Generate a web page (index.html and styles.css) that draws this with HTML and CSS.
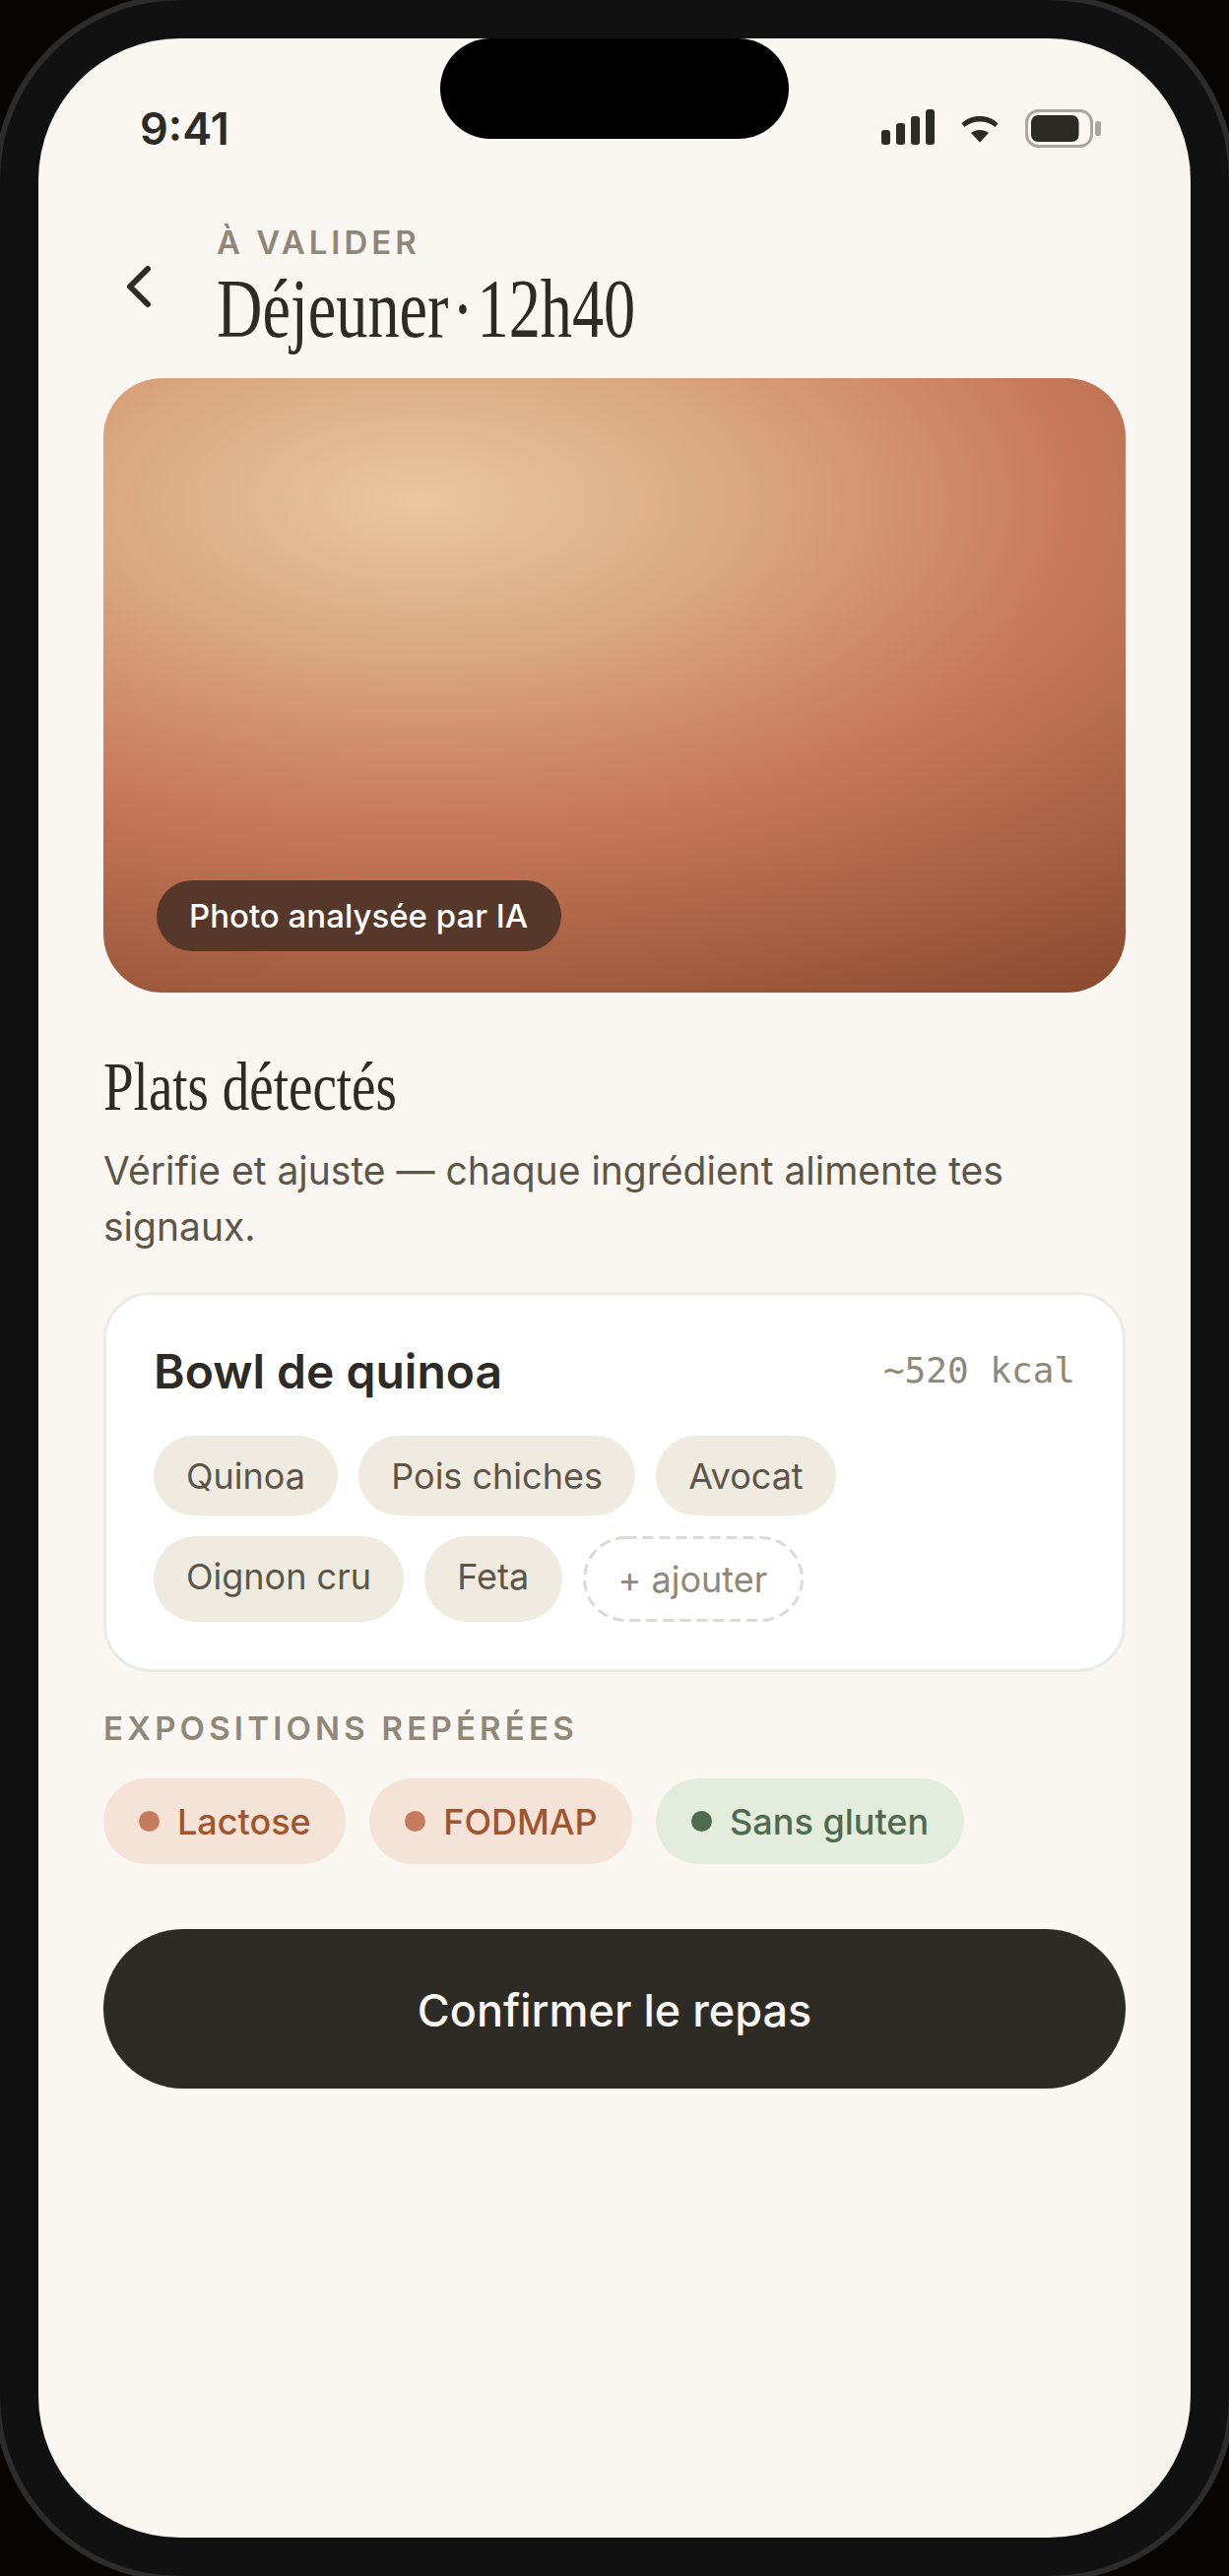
FILE: index.html
```html
<!DOCTYPE html>
<html lang="fr">
<head>
<meta charset="utf-8">
<title>Déjeuner · 12h40</title>
<link rel="stylesheet" href="styles.css">
</head>
<body>
<div class="phone">
  <div class="screen">
    <div class="island"></div>
    <div class="status">
      <span class="time">9:41</span>
      <div class="status-icons">
        <svg class="ic-signal" width="54" height="39" viewBox="0 0 54 39"><rect x="0" y="21" width="9" height="15" rx="3"/><rect x="15" y="14" width="9" height="22" rx="3"/><rect x="30" y="7" width="9" height="29" rx="3"/><rect x="45" y="0" width="9" height="36" rx="3"/></svg>
        <svg class="ic-wifi" width="38" height="39" viewBox="0 0 38 39"><g transform="translate(0 7)"><path d="M.5 7.5C5 2.5 11.5 0 19 0s14 2.500 18.500 7.500L34.500 11C30.500 7.500 25 5.500 19 5.500S7.500 7.500 3.500 11z"/><path d="M10 17c2.500-2 5.500-3 9-3s6.500 1 9 3L19 26.500z"/></g></svg>
        <svg class="ic-battery" width="77" height="39" viewBox="0 0 77 39"><rect x="1.500" y="1.500" width="66" height="36" rx="12" fill="none" stroke="#AAA79F" stroke-width="3"/><rect x="6" y="6" width="48.500" height="27" rx="7" fill="#2D2B26"/><rect x="71" y="12" width="6" height="15" rx="2.500" fill="#AAA79F"/></svg>
      </div>
    </div>
    <header class="head">
      <svg class="back" width="72" height="72" viewBox="0 0 24 24"><path d="M15 6l-6 6 6 6" fill="none" stroke="#2D2B26" stroke-width="2" stroke-linecap="round" stroke-linejoin="round"/></svg>
      <div class="head-text">
        <div class="eyebrow">À VALIDER</div>
        <h1 class="title">Déjeuner · 12h40</h1>
      </div>
    </header>
    <main class="content">
      <div class="photo">
        <span class="photo-badge">Photo analysée par IA</span>
      </div>
      <h2 class="section-title">Plats détectés</h2>
      <p class="desc">Vérifie et ajuste — chaque ingrédient alimente tes signaux.</p>
      <section class="card">
        <div class="card-head">
          <span class="dish">Bowl de quinoa</span>
          <span class="kcal">~520 kcal</span>
        </div>
        <div class="chips">
          <span class="chip">Quinoa</span>
          <span class="chip">Pois chiches</span>
          <span class="chip">Avocat</span>
          <span class="chip">Oignon cru</span>
          <span class="chip">Feta</span>
          <span class="chip chip-add">+ ajouter<svg class="dash" width="100%" height="100%"><rect class="dash-rect" x="1.500" y="1.500" rx="42" ry="42"/></svg></span>
        </div>
      </section>
      <div class="label">EXPOSITIONS REPÉRÉES</div>
      <div class="pills">
        <span class="pill pill-warn"><i class="dot"></i>Lactose</span>
        <span class="pill pill-warn"><i class="dot"></i>FODMAP</span>
        <span class="pill pill-ok"><i class="dot"></i>Sans gluten</span>
      </div>
      <button class="confirm">Confirmer le repas</button>
    </main>
  </div>
</div>
</body>
</html>
```
FILE: styles.css
```css
* { box-sizing: border-box; }
html, body { margin: 0; padding: 0; }
body {
  width: 1248px;
  height: 2616px;
  overflow: hidden;
  background: #060504;
  font-family: "Inter", "Liberation Sans", sans-serif;
  color: #2D2B26;
}
.phone {
  width: 1248px;
  height: 2616px;
  padding: 39px;
  background: #111111;
  border-radius: 183px;
  box-shadow: 0 0 0 6px #2C2C2C;
}
.screen {
  position: relative;
  height: 2538px;
  border-radius: 144px;
  overflow: hidden;
  background: linear-gradient(90deg, #FAF7F2 92%, #F6F3EE 100%);
}
.island {
  position: absolute;
  left: 408px;
  top: 0;
  width: 354px;
  height: 102px;
  border-radius: 51px;
  background: #000;
}
.status {
  display: flex;
  justify-content: space-between;
  align-items: flex-start;
  height: 119px;
  padding: 65px 91px 0 103px;
}
.time {
  font-size: 45px;
  line-height: 54px;
  font-weight: 600;
  color: #2D2B26;
}
.status-icons {
  display: flex;
  gap: 27px;
  margin-top: 7px;
  fill: #2D2B26;
}
.head {
  display: flex;
  align-items: center;
  gap: 43px;
  padding: 68px 66px 0;
}
.back { flex: none; margin-top: -3px; }
.eyebrow {
  font-size: 33px;
  line-height: 40px;
  font-weight: 600;
  letter-spacing: 3.96px;
  color: #8F8778;
}
.title {
  margin: 3px 0 0;
  font-family: "Liberation Serif", serif;
  font-size: 84px;
  line-height: 90px;
  font-weight: 400;
  word-spacing: -16px;
  white-space: nowrap;
  transform: scaleX(0.765);
  transform-origin: left center;
  color: #2D2B26;
}
.content { padding: 25px 66px 0; }
.photo {
  position: relative;
  height: 624px;
  border-radius: 60px;
  background: radial-gradient(1235px 600px at 31% 20%, #E8C9A0 0%, #D9A57E 28%, #C87A5A 54%, #8B4A2E 100%);
}
.photo-badge {
  position: absolute;
  left: 54px;
  bottom: 42px;
  height: 72px;
  padding: 0 34px 0 33px;
  line-height: 72px;
  border-radius: 36px;
  background: #56382B;
  color: #FFFFFF;
  font-size: 33px;
  font-weight: 500;
  white-space: nowrap;
}
.section-title {
  margin: 57px 0 0;
  font-family: "Liberation Serif", serif;
  font-size: 70px;
  line-height: 78px;
  font-weight: 400;
  white-space: nowrap;
  transform: scaleX(0.786);
  transform-origin: left center;
}
.desc {
  margin: 17px 0 0;
  font-size: 39px;
  line-height: 57px;
  color: #5C5548;
}
.card {
  margin-top: 38px;
  padding: 48px;
  background: #FFFFFF;
  border: 3px solid #ECEAE6;
  border-radius: 48px;
}
.card-head {
  display: flex;
  justify-content: space-between;
  align-items: flex-start;
}
.dish {
  padding-top: 1px;
  font-size: 48px;
  line-height: 58px;
  font-weight: 600;
}
.kcal {
  font-family: "DejaVu Sans Mono", "Liberation Mono", monospace;
  font-size: 36px;
  line-height: 58px;
  color: #8F8778;
}
.chips {
  display: flex;
  flex-wrap: wrap;
  gap: 21px;
  margin-top: 36px;
}
.chip {
  padding: 19px 33.300px 17px 33px;
  border-radius: 999px;
  background: #F0EBE1;
  color: #5C5548;
  font-size: 36px;
  line-height: 45px;
}
.chip-add {
  position: relative;
  background: transparent;
  border: 3px solid transparent;
  color: #8F8778;
}
.dash {
  position: absolute;
  left: -3px;
  top: -3px;
  width: calc(100% + 6px);
  height: calc(100% + 6px);
}
.dash-rect {
  width: calc(100% - 3px);
  height: calc(100% - 3px);
  fill: none;
  stroke: #DCDAD6;
  stroke-width: 3;
  stroke-dasharray: 11 6;
}
.label {
  margin-top: 37px;
  font-size: 33px;
  line-height: 40px;
  font-weight: 600;
  letter-spacing: 4.2px;
  color: #8F8778;
}
.pills {
  display: flex;
  gap: 24px;
  margin-top: 31px;
}
.pill {
  display: flex;
  align-items: center;
  gap: 18px;
  padding: 22px 35.500px 20px 36px;
  border-radius: 999px;
  font-size: 36px;
  line-height: 45px;
  font-weight: 500;
}
.dot {
  width: 21px;
  height: 21px;
  margin-top: -2px;
  border-radius: 50%;
}
.pill-warn { background: #F5E3D8; color: #A0552F; }
.pill-warn .dot { background: #C67B5C; }
.pill-ok { background: #E4ECDD; color: #4F6B4F; }
.pill-ok .dot { background: #4F6B4F; }
.confirm {
  display: block;
  width: 100%;
  height: 162px;
  margin-top: 66px;
  padding: 2px 0 0;
  border: 0;
  border-radius: 81px;
  background: #2D2B26;
  color: #FAF7F2;
  font-family: "Inter", "Liberation Sans", sans-serif;
  font-size: 45px;
  font-weight: 500;
}
```
